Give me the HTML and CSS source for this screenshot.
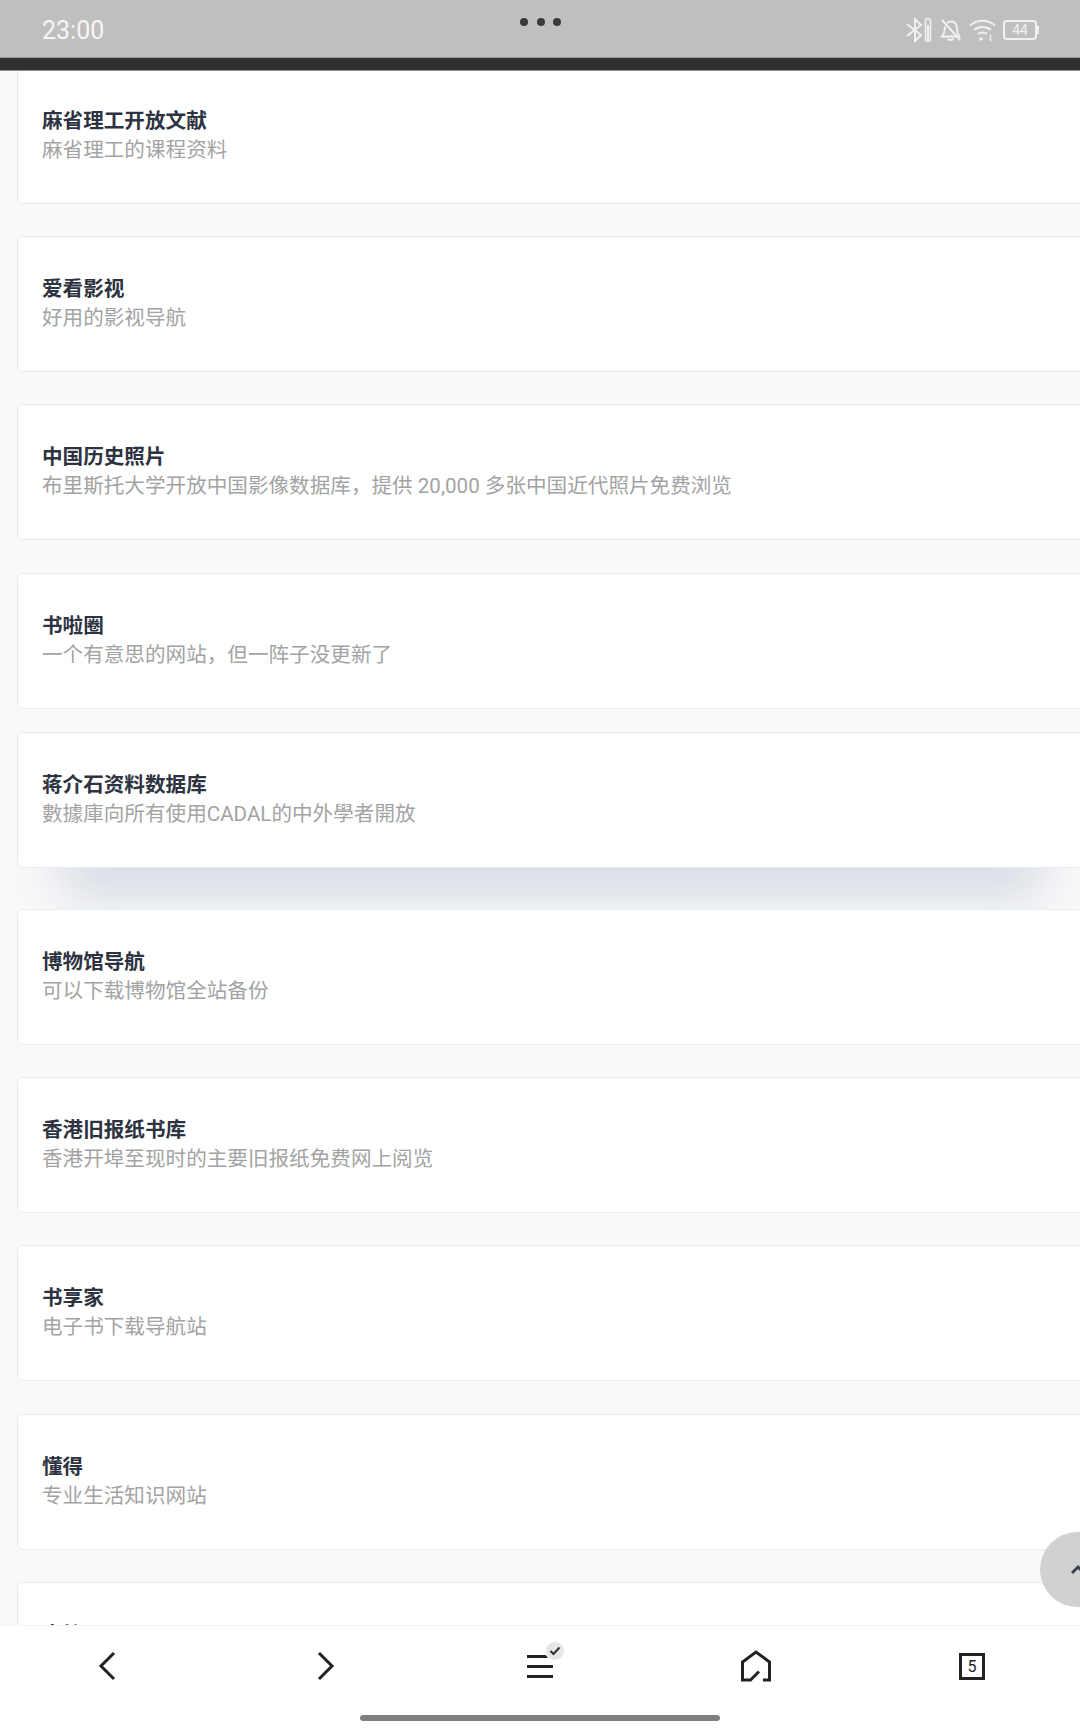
FILE: index.html
```html
<!DOCTYPE html>
<html lang="zh-CN">
<head>
    <meta charset="UTF-8">
    <meta name="viewport" content="width=device-width, initial-scale=1.0">
    <title>资源导航</title>
    <link rel="stylesheet" href="styles.css">
</head>
<body>
    <div class="page">
        <div class="statusBar">
            <span class="time">23:00</span>
            <div class="dots"><i></i><i></i><i></i></div>
            <div class="statusIcons">
                <!-- bluetooth + its little battery -->
                <svg width="28" height="26" viewBox="0 0 28 26" fill="none" stroke="#f1f1f1" stroke-width="2">
                    <path d="M2 7l14 11-6 6V2l6 6L2 19"/>
                    <rect x="20.5" y="1.5" width="5" height="23" rx="2.5" stroke-width="1.6"/>
                    <rect x="22" y="8" width="2" height="15" fill="#f1f1f1" stroke="none"/>
                </svg>
                <!-- bell, muted -->
                <svg width="22" height="24" viewBox="0 0 22 24" fill="none" stroke="#f1f1f1" stroke-width="2">
                    <path d="M4 18.5h15.5c-2-2.500-2.500-4-2.500-8 0-4-2.500-7-6-7-1.500 0-3 .6-4 1.700M5 8.500c-.2 4.500-.5 7-3 10h2"/>
                    <path d="M8 20.500c.5 2 4.500 2 5.500 0M2 2l18 20"/>
                </svg>
                <!-- wifi -->
                <svg width="27" height="24" viewBox="0 0 27 24" fill="none" stroke="#f1f1f1" stroke-width="2">
                    <path d="M1 7.500c7-6.500 18-6.500 25 0M5 12c4.500-4 12.500-4 17 0M9 16c2.500-2 6.500-2 9 0"/>
                    <circle cx="12" cy="21" r="1.800" fill="#f1f1f1" stroke="none"/>
                    <path d="M21.500 16.500v7" stroke-width="1.500"/>
                </svg>
                <div class="battery"><span>44</span></div>
            </div>
        </div>
        <div class="darkBar"></div>

        <main class="list">
            <div class="card"><h4>麻省理工开放文献</h4><p>麻省理工的课程资料</p></div>
            <div class="card"><h4>爱看影视</h4><p>好用的影视导航</p></div>
            <div class="card"><h4>中国历史照片</h4><p>布里斯托大学开放中国影像数据库，提供 20,000 多张中国近代照片免费浏览</p></div>
            <div class="card"><h4>书啦圈</h4><p>一个有意思的网站，但一阵子没更新了</p></div>
            <div class="card card-hover"><h4>蒋介石资料数据库</h4><p>數據庫向所有使用CADAL的中外學者開放</p></div>
            <div class="card"><h4>博物馆导航</h4><p>可以下载博物馆全站备份</p></div>
            <div class="card"><h4>香港旧报纸书库</h4><p>香港开埠至现时的主要旧报纸免费网上阅览</p></div>
            <div class="card"><h4>书享家</h4><p>电子书下载导航站</p></div>
            <div class="card"><h4>懂得</h4><p>专业生活知识网站</p></div>
            <div class="card"><h4>古籍</h4><p>&nbsp;</p></div>
        </main>

        <div class="toTop">
            <svg width="14" height="11" viewBox="0 0 14 11" fill="none" stroke="#3a3f4a" stroke-width="3"><path d="M1 9l6-6 6 6"/></svg>
        </div>

        <nav class="bottomNav">
            <div class="navIcons">
                <svg width="24" height="32" viewBox="0 0 24 32" fill="none" stroke="#222" stroke-width="3"><path d="M18 3L5 16l13 13"/></svg>
                <svg width="24" height="32" viewBox="0 0 24 32" fill="none" stroke="#222" stroke-width="3"><path d="M7 3l13 13L7 29"/></svg>
                <div class="menuIcon">
                    <span></span><span></span><span></span>
                    <div class="menuCheck">
                        <svg width="12" height="10" viewBox="0 0 12 10" fill="none" stroke="#333" stroke-width="2"><path d="M1.500 5l3 3 6-6.500"/></svg>
                    </div>
                </div>
                <svg width="32" height="32" viewBox="0 0 32 32" fill="none" stroke="#222" stroke-width="3"><path d="M23 30h6.500V12L16 2 2.500 12v18h8l8.500-8.500"/></svg>
                <div class="tabsIcon">5</div>
            </div>
            <div class="homeBar"></div>
        </nav>
    </div>
</body>
</html>
```

FILE: styles.css
```css
* {
    box-sizing: border-box;
}
body {
    margin: 0;
    font-family: Roboto, "Noto Sans CJK SC", sans-serif;
    background-color: #f9f9fa;
}
.page {
    position: relative;
    width: 1080px;
    height: 1728px;
    display: flex;
    flex-direction: column;
    overflow: hidden;
}
.statusBar {
    height: 58px;
    flex-shrink: 0;
    display: flex;
    align-items: center;
    justify-content: space-between;
    padding: 3px 41px 0 42px;
    background-color: #bfbfbf;
    border-bottom: 1px solid #9a9a9a;
    position: relative;
    z-index: 1;
}
.time {
    font-size: 25px;
    color: #f6f6f6;
}
.dots {
    position: absolute;
    top: 18px;
    left: 520px;
    display: flex;
    gap: 8.5px;
}
.dots i {
    width: 8px;
    height: 8px;
    border-radius: 50%;
    background-color: #3a3a3a;
}
.statusIcons {
    display: flex;
    align-items: center;
    gap: 7px;
    margin-right: 2px;
}
.battery {
    position: relative;
    width: 34px;
    height: 20px;
    border: 2px solid #f1f1f1;
    border-radius: 4px;
    display: flex;
    align-items: center;
    justify-content: center;
    font-size: 14px;
    color: #f1f1f1;
}
.battery::after {
    content: "";
    position: absolute;
    right: -4px;
    top: 4px;
    width: 2px;
    height: 8px;
    background-color: #f1f1f1;
}
.darkBar {
    height: 13px;
    flex-shrink: 0;
    background-color: #2e3032;
    border-bottom: 1px solid #8f9091;
    position: relative;
    z-index: 1;
}
.list {
    flex: 1;
    min-height: 0;
    overflow: hidden;
    display: flex;
    flex-direction: column;
    gap: 32.2px;
    margin-top: -3px;
    padding-left: 17px;
}
.card {
    position: relative;
    flex-shrink: 0;
    width: 1070px;
    height: 136px;
    display: flex;
    flex-direction: column;
    justify-content: center;
    padding: 0 24px;
    background-color: #fff;
    border: 1px solid #e5edf1;
    border-radius: 6px;
}
.card-hover {
    transform: translateY(-9px);
    box-shadow: 0 70px 50px -45px rgba(105, 125, 160, 0.3);
}
.card h4 {
    margin: 0;
    font-size: 20.6px;
    font-weight: 700;
    line-height: 29px;
    color: #2d3340;
}
.card p {
    margin: 0;
    font-size: 20.6px;
    line-height: 29px;
    color: #a3a3a3;
}
.toTop {
    position: absolute;
    left: 1040px;
    top: 1532px;
    width: 75px;
    height: 75px;
    border-radius: 50%;
    background-color: #cfd1d2;
    display: flex;
    align-items: center;
    justify-content: center;
}
.bottomNav {
    height: 103px;
    flex-shrink: 0;
    background-color: #fff;
    border-top: 1px solid #f4f4f4;
    position: relative;
}
.navIcons {
    height: 78px;
    display: grid;
    grid-template-columns: repeat(5, 216px);
    justify-items: center;
    align-items: center;
    padding-top: 2px;
}
.menuIcon {
    position: relative;
    width: 26px;
    height: 23px;
    display: flex;
    flex-direction: column;
    justify-content: space-between;
}
.menuIcon span {
    height: 3px;
    background-color: #222;
}
.menuCheck {
    position: absolute;
    top: -13px;
    left: 19px;
    width: 18px;
    height: 18px;
    border-radius: 50%;
    background-color: #e6e6e6;
    box-shadow: 0 0 0 1px #fff;
    display: flex;
    align-items: center;
    justify-content: center;
}
.tabsIcon {
    width: 26px;
    height: 27px;
    border: 3px solid #222;
    display: flex;
    align-items: center;
    justify-content: center;
    font-size: 16px;
    color: #222;
}
.homeBar {
    position: absolute;
    left: 360px;
    bottom: 7px;
    width: 360px;
    height: 6px;
    border-radius: 3px;
    background-color: #7f7f7f;
}
```
